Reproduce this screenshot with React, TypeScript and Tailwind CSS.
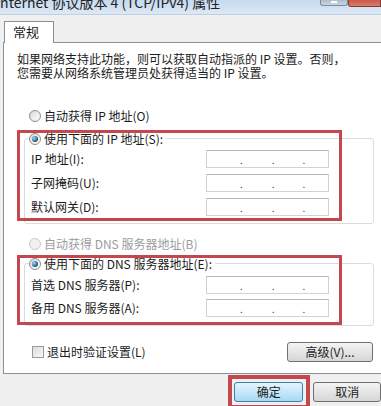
import React from 'react';

const font = "font-['Noto_Sans_CJK_SC','Noto_Sans',sans-serif]";

function Radio({ checked, disabled }: { checked?: boolean; disabled?: boolean }) {
  return (
    <span
      className={
        'w-[12px] h-[12px] shrink-0 rounded-full border flex items-center justify-center ' +
        (disabled
          ? 'border-[#c9c9c9] bg-[#f1f1f1]'
          : 'border-[#8d8d8d] bg-gradient-to-br from-[#d9d9d9] to-[#ffffff]')
      }
    >
      {checked && (
        <span className="w-[6px] h-[6px] rounded-full bg-[radial-gradient(circle_at_35%_35%,#9fdcff,#1d4f72_70%)]" />
      )}
    </span>
  );
}

function IpBox() {
  return (
    <div className="w-[123px] h-[18px] border border-[#cfd3d8] border-t-[#b4b8bd] bg-white flex items-end pb-[2px] text-[10px] leading-[10px] text-[#333]">
      <span className="ml-[33px]">.</span>
      <span className="ml-[29px]">.</span>
      <span className="ml-[28px]">.</span>
    </div>
  );
}

function Field({ label }: { label: string }) {
  return (
    <div className="flex items-center h-[18px]">
      <span className="w-[181px] pl-[6px] whitespace-nowrap">{label}</span>
      <IpBox />
    </div>
  );
}

function Group({
  title,
  fields,
  gap,
  mt,
  pb,
}: {
  title: string;
  fields: string[];
  gap: string;
  mt: string;
  pb: string;
}) {
  return (
    <div className={'ml-[20px] w-[350px] border border-[#d8dde2] rounded-[3px] ' + pb}>
      <div className="-mt-[7px] ml-[4px] w-fit h-[14px] flex items-center gap-[3px] bg-white pr-[3px]">
        <Radio checked />
        <span className="whitespace-nowrap">{title}</span>
      </div>
      <div className={'flex flex-col ' + gap + ' ' + mt}>
        {fields.map((f) => (
          <Field key={f} label={f} />
        ))}
      </div>
    </div>
  );
}

function WinButton({ label, primary, w }: { label: string; primary?: boolean; w: string }) {
  return (
    <div
      className={
        w +
        ' h-[20px] rounded-[3px] border flex items-center justify-center ' +
        (primary
          ? 'border-[#3c7fb1] bg-gradient-to-b from-[#e5f4fc] to-[#a7d9f5]'
          : 'border-[#707070] bg-gradient-to-b from-[#f4f4f4] to-[#d6d6d6]')
      }
    >
      {label}
    </div>
  );
}

export default function App() {
  return (
    <div className={'relative w-[381px] h-[406px] overflow-hidden bg-[#f0f0f0] text-[12px] leading-[14px] text-[#1b1b1b] ' + font}>
      {/* title bar */}
      <div className="h-[15px] flex justify-between bg-gradient-to-b from-[#c6daef] to-[#dce8f5] border-b border-[#c3cfdc]">
        <div className="-mt-[5px] -ml-[4px] text-[14px] leading-[14px] whitespace-nowrap text-[#222]">
          Internet 协议版本 4 (TCP/IPv4) 属性
        </div>
        <div className="flex items-start">
          <div className="w-[28px] h-[6px] rounded-b-[3px] border border-t-0 border-[#7d8b9b] bg-gradient-to-b from-[#aebccb] to-[#c9d5e2] flex justify-center">
            <span className="w-[6px] h-[2px] mt-[1px] bg-white" />
          </div>
          <div className="w-[33px] h-[7px] rounded-bl-[3px] border border-t-0 border-[#8a3a31] bg-gradient-to-b from-[#c9584a] to-[#d97d6e]" />
        </div>
      </div>

      {/* tab */}
      <div className="pt-[6px]">
        <div className="relative z-10 ml-[4px] -mb-px w-[50px] h-[22px] border border-b-0 border-[#8c8f94] bg-white text-[13px] leading-[20px] pl-[8px]">
          常规
        </div>

        {/* panel */}
        <div className="ml-[3px] w-[400px] h-[332px] border border-[#8c8f94] bg-white">
          <div className="pt-[9px] pl-[13px] whitespace-nowrap leading-[14px]">
            <div>如果网络支持此功能，则可以获取自动指派的 IP 设置。否则，</div>
            <div>您需要从网络系统管理员处获得适当的 IP 设置。</div>
          </div>

          <div className="mt-[29px] ml-[25px] h-[14px] flex items-center gap-[3px]">
            <Radio />
            <span>自动获得 IP 地址(O)</span>
          </div>

          <div className="mt-[15px]">
            <Group
              title="使用下面的 IP 地址(S):"
              fields={['IP 地址(I):', '子网掩码(U):', '默认网关(D):']}
              gap="gap-[6px]"
              mt="mt-[4px]"
              pb="pb-[7px]"
            />
          </div>

          <div className="mt-[13px] ml-[25px] h-[14px] flex items-center gap-[3px] text-[#9c9c9c]">
            <Radio disabled />
            <span>自动获得 DNS 服务器地址(B)</span>
          </div>

          <div className="mt-[12px]">
            <Group
              title="使用下面的 DNS 服务器地址(E):"
              fields={['首选 DNS 服务器(P):', '备用 DNS 服务器(A):']}
              gap="gap-[5px]"
              mt="mt-[5px]"
              pb="pb-[8px]"
            />
          </div>

          <div className="mt-[16px] flex items-center">
            <div className="w-[283px] pl-[28px] flex items-center gap-[3px]">
              <span className="w-[12px] h-[12px] border border-[#9a9a9a] bg-gradient-to-br from-[#dcdcdc] to-[#f8f8f8]" />
              <span>退出时验证设置(L)</span>
            </div>
            <WinButton label="高级(V)..." w="w-[86px]" />
          </div>
        </div>

        {/* bottom buttons */}
        <div className="mt-[8px] pl-[234px] flex gap-[10px]">
          <WinButton label="确定" primary w="w-[72px]" />
          <WinButton label="取消" w="w-[70px]" />
        </div>
      </div>

      {/* red annotation boxes */}
      <div className="absolute left-[17px] top-[130px] w-[325px] h-[91px] border-[3px] border-[#c4474d]" />
      <div className="absolute left-[17px] top-[255px] w-[325px] h-[70px] border-[3px] border-[#c4474d]" />
      <div className="absolute left-[228px] top-[375px] w-[82px] h-[34px] border-[4px] border-[#c4474d]" />
    </div>
  );
}
